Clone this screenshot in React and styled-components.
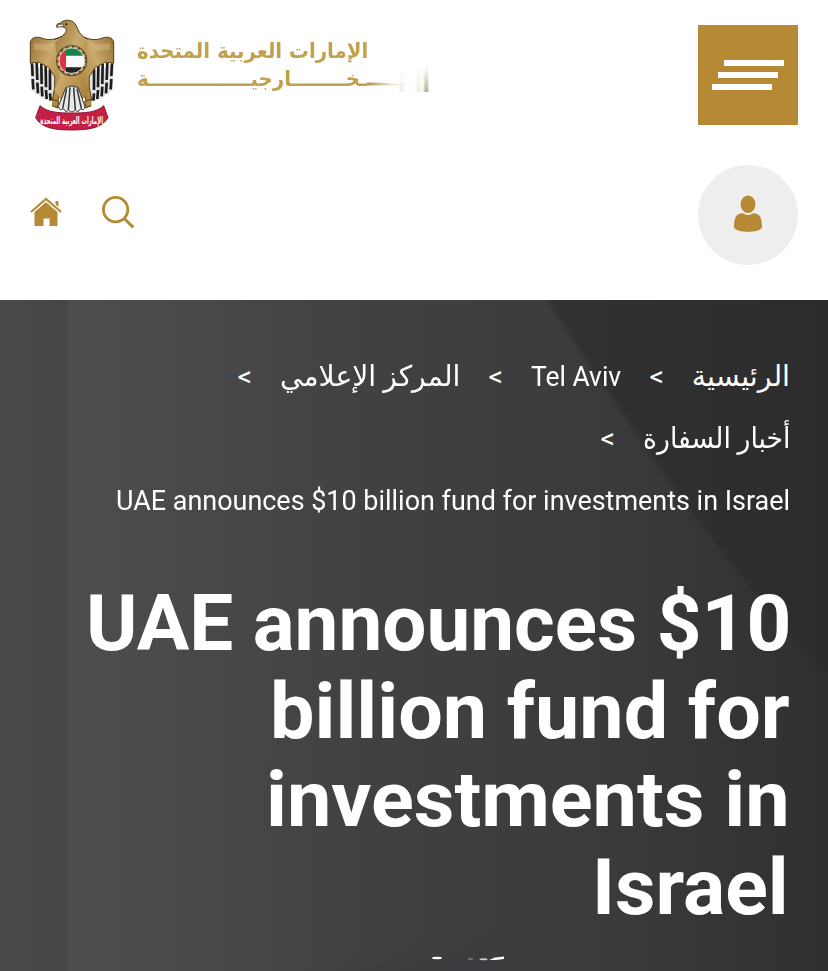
import React, { useLayoutEffect, useRef, useState } from "react";
import styled, { createGlobalStyle } from "styled-components";

const gold = "#b68a35";

const GlobalStyle = createGlobalStyle`
  * {
    box-sizing: border-box;
  }
  body {
    margin: 0;
    background: #fff;
  }
`;

const Page = styled.div`
  width: 828px;
  height: 971px;
  display: flex;
  flex-direction: column;
  overflow: hidden;
  font-family: Roboto, "DejaVu Sans", sans-serif;
`;

const Header = styled.header`
  height: 300px;
  padding: 20px 30px 0;
  background: #fff;
`;
const TopBar = styled.div`
  height: 145px;
  display: flex;
  justify-content: space-between;
`;
const Brand = styled.div`
  display: flex;
  gap: 23px;
`;
const BrandText = styled.div`
  padding-top: 18px;
  color: #c2a14d;
  font-family: "DejaVu Sans", sans-serif;
  font-weight: bold;
`;
const BrandLine = styled.div`
  display: flex;
  direction: ltr;
  align-items: flex-start;
  height: 28px;
  line-height: 27px;
  font-size: ${(props) => props.$size}px;
`;
const MenuButton = styled.button`
  width: 100px;
  height: 100px;
  margin-top: 5px;
  padding: 35px 14px 0;
  border: 0;
  background: ${gold};
  display: flex;
  flex-direction: column;
  gap: 6px;
`;
const MenuBar = styled.span`
  width: 60px;
  height: 6px;
  margin-left: ${(props) => props.$indent}px;
  background: #fff;
`;
const ToolBar = styled.div`
  display: flex;
  justify-content: space-between;
`;
const Tools = styled.div`
  display: flex;
  gap: 38px;
  padding-top: 30px;
`;
const UserButton = styled.button`
  width: 100px;
  height: 100px;
  padding: 0 0 3px;
  border: 0;
  border-radius: 50%;
  background: #eee;
  display: flex;
  align-items: center;
  justify-content: center;
`;

const Hero = styled.section`
  position: relative;
  flex: 1;
  padding: 46px 38px 0;
  direction: rtl;
  color: #fff;
`;
const Backdrop = styled.svg`
  position: absolute;
  top: 0;
  left: 0;
`;
const HeroContent = styled.div`
  position: relative;
`;
const Crumbs = styled.nav`
  font-size: 28.5px;
  font-weight: 400;
`;
const CrumbRow = styled.div`
  height: 62px;
  line-height: 62px;
  display: flex;
  gap: 28px;
`;
const Title = styled.h1`
  margin: 48px 0 0;
  font-size: 78px;
  line-height: 88px;
  font-weight: 700;
`;
const TitleLine = styled.span`
  display: flex;
  height: 88px;
  margin-right: ${(props) => props.$inset || 0}px;
`;

const FitBox = styled.span`
  display: block;
  flex: none;
  width: ${(props) => props.$width}px;
  direction: ${(props) => props.$dir};
`;
const FitInner = styled.span`
  display: inline-block;
  white-space: nowrap;
  transform-origin: ${(props) => (props.$dir === "rtl" ? "right" : "left")} center;
`;

// Squeezes or stretches a run of text to the given width
const FitText = ({ width, dir = "ltr", children }) => {
  const ref = useRef(null);
  const [scale, setScale] = useState(1);
  useLayoutEffect(() => {
    setScale(width / ref.current.offsetWidth);
  }, [width]);
  return (
    <FitBox $width={width} $dir={dir}>
      <FitInner ref={ref} $dir={dir} style={{ transform: `scaleX(${scale})` }}>
        {children}
      </FitInner>
    </FitBox>
  );
};

const Wing = () => (
  <g>
    <path d="M31 160 L34 241 L56 256 L78 270 L104 278 L119 222 L105 190 Z" fill="#e4e4e4" />
    <g stroke="#1d1d1d" strokeWidth="8" fill="none">
      <path d="M36 160 L38 198 M50 158 L52 210 M64 162 L65 222 M77 166 L78 232 M90 176 V240" />
      <path d="M38 207 L40 238 M52 218 L54 250 M65 230 L67 259 M78 240 L80 267 M90 250 L92 272" />
    </g>
    <path
      d="M128 78 C103 91 84 91 64 84 C48 78 34 83 31 96 L31 160 C39 154 48 162 55 156 C66 164 72 162 79 170 C88 169 91 181 98 192 C108 196 103 215 104 232 L97 270 L109 285 L125 240 L128 185 Z"
      fill="url(#plumage)"
      stroke="#513b14"
      strokeWidth="3"
    />
    <path d="M44 98 C64 104 82 101 105 98 L92 126 C72 120 57 118 40 120 Z" fill="#dcc592" opacity=".4" />
  </g>
);

const Emblem = () => (
  <svg width="84" height="112" viewBox="30 30 252 336" overflow="visible">
    <defs>
      <linearGradient id="plumage" x1="0" y1="0" x2="1" y2="1">
        <stop offset="0" stopColor="#94702f" />
        <stop offset=".45" stopColor="#c9a96d" />
        <stop offset="1" stopColor="#a67b30" />
      </linearGradient>
      <clipPath id="disc">
        <circle cx="155" cy="152" r="38" />
      </clipPath>
    </defs>
    <Wing />
    <g transform="translate(312 0) scale(-1 1)">
      <Wing />
    </g>
    <path
      d="M111 52 C107 44 113 40 122 39 C130 29 148 28 160 36 C173 47 172 66 190 80 L204 95 L192 205 L207 238 L187 270 L173 236 H138 L123 272 L103 238 L118 205 L105 98 L126 79 C138 68 142 61 137 55 C128 49 119 47 111 52 Z"
      fill="url(#plumage)"
    />
    <path
      d="M105 88 L126 79 C138 68 142 61 137 55 C128 49 119 47 111 52 C107 44 113 40 122 39 C130 29 148 28 160 36 C173 47 172 66 190 80 L204 88"
      fill="none"
      stroke="#513b14"
      strokeWidth="3"
    />
    <path d="M111 52 C111 44 118 41 129 43 L132 49 Z" fill="#eee6d3" stroke="#333" strokeWidth="2" />
    <circle cx="139" cy="43" r="3" fill="#171717" />
    <path
      d="M137 234 Q155 222 175 234 L195 290 Q192 304 182 296 Q174 310 166 300 Q155 312 146 300 Q138 310 130 296 Q119 304 115 290 Z"
      fill="#e8e8e8"
      stroke="#333"
      strokeWidth="3"
    />
    <path d="M140 236 L128 295 M150 232 L145 300 M161 232 L166 300 M171 236 L184 295" stroke="#333" strokeWidth="4.5" />
    <path d="M96 268 L116 274 L112 294 L96 287 M214 268 L194 274 L198 294 L214 287" fill="#b18a3c" stroke="#513b14" strokeWidth="3" />
    <circle cx="155" cy="152" r="45" fill="#c6b083" stroke="#705729" strokeWidth="4" />
    <circle cx="155" cy="152" r="42" fill="none" stroke="#46462e" strokeWidth="6" strokeDasharray="6 12" />
    <g clipPath="url(#disc)">
      <path d="M115 110 H196 V140 H115 Z" fill="#16834a" />
      <path d="M115 137 H196 V173 H115 Z" fill="#fafafa" />
      <path d="M115 172 H196 V195 H115 Z" fill="#242424" />
      <path d="M115 110 H138 V195 H115 Z" fill="#df3340" />
    </g>
    <circle cx="155" cy="152" r="38" fill="none" stroke="#f4f4f4" strokeWidth="2" />
    <path
      d="M60 287 C82 308 118 309 155 309 C194 309 230 308 251 287 L264 323 C246 354 206 360 155 360 C104 360 64 354 47 323 Z"
      fill="#c61f45"
      stroke="#8d1833"
      strokeWidth="3"
    />
    <text transform="translate(155 342) scale(.52 1)" textAnchor="middle" direction="rtl" fontFamily="DejaVu Sans, sans-serif" fontSize="31" fontWeight="bold" fill="#fff">
      الإمارات العربية المتحدة
    </text>
  </svg>
);

const FadedStroke = () => (
  <svg width="64" height="27" viewBox="0 0 64 27">
    <defs>
      <linearGradient id="smear">
        <stop offset="0" stopColor="#b0954c" />
        <stop offset="1" stopColor="#d9cfb5" stopOpacity="0" />
      </linearGradient>
      <linearGradient id="ghost" x1="0" y1="0" x2="0" y2="1">
        <stop offset="0" stopColor="#b8b08c" stopOpacity="0" />
        <stop offset="1" stopColor="#a49b70" />
      </linearGradient>
      <filter id="haze">
        <feGaussianBlur stdDeviation="1 .4" />
      </filter>
    </defs>
    <path d="M0 16.5 H10 L44 19 L10 19.5 H0 Z" fill="url(#smear)" />
    <g filter="url(#haze)">
      <rect x="33" y="2" width="4" height="24" fill="url(#ghost)" opacity=".2" />
      <rect x="49" y="0" width="5" height="26" fill="url(#ghost)" opacity=".2" />
      <rect x="57.5" y="0" width="3.5" height="26" fill="url(#ghost)" />
    </g>
  </svg>
);

const HomeIcon = () => (
  <svg width="34" height="34" viewBox="0 0 34 34" fill={gold}>
    <path d="M4.5 17 L16 7 L27.5 17 V31 H19.5 V23.5 H13.5 V31 H4.5 Z" />
    <path d="M1 17 L16 4 L31 17" fill="none" stroke={gold} strokeWidth="2.2" />
    <path d="M3 17.6 L16 6.4 L29 17.6" fill="none" stroke="#fff" strokeWidth="1" />
    <path d="M25.5 6 H28.5 V12 L25.5 9.5 Z" />
  </svg>
);

const SearchIcon = () => (
  <svg width="34" height="36" viewBox="0 0 34 36" fill="none" stroke={gold}>
    <circle cx="13.6" cy="14.6" r="12.2" strokeWidth="2.8" />
    <path d="M22.2 23.5 L31.3 32.4" strokeWidth="3" />
  </svg>
);

const UserIcon = () => (
  <svg width="28" height="37" viewBox="0 0 28 37" fill={gold}>
    <ellipse cx="14" cy="9.2" rx="7.4" ry="8.8" />
    <path d="M7.5 18.3 C10 18.3 10.5 20 14 20 C17.5 20 18 18.3 20.5 18.3 C26 19 28 23 28 32.5 C26 35.5 21 36.8 14 36.8 C7 36.8 2 35.5 0 32.5 C0 23 2 19 7.5 18.3 Z" />
  </svg>
);

const HeroBackdrop = () => (
  <Backdrop width="828" height="671" viewBox="0 0 828 671">
    <defs>
      <linearGradient id="wall">
        <stop offset="0" stopColor="#494949" />
        <stop offset=".079" stopColor="#464646" />
        <stop offset=".085" stopColor="#4d4d4d" />
        <stop offset=".2" stopColor="#4a4a4a" />
        <stop offset=".45" stopColor="#414141" />
        <stop offset=".75" stopColor="#3a3a3a" />
        <stop offset="1" stopColor="#303030" />
      </linearGradient>
      <linearGradient id="shade">
        <stop offset="0" stopColor="#323232" />
        <stop offset="1" stopColor="#2c2c2c" />
      </linearGradient>
      <filter id="soft" x="-10%" y="-10%" width="120%" height="120%" colorInterpolationFilters="sRGB">
        <feGaussianBlur stdDeviation="2" />
      </filter>
      <filter id="dusk" x="-30%" y="-60%" width="160%" height="220%" colorInterpolationFilters="sRGB">
        <feGaussianBlur stdDeviation="8" />
      </filter>
      <filter id="glint" x="-20%" y="-100%" width="140%" height="300%">
        <feGaussianBlur stdDeviation=".5" />
      </filter>
    </defs>
    <rect width="828" height="671" fill="url(#wall)" />
    <path d="M538 -15 C640 145 730 275 850 400 V-15 Z" fill="url(#shade)" filter="url(#soft)" />
    <path d="M300 690 Q420 652 505 650 V690 Z" fill="#393b40" opacity=".6" filter="url(#dusk)" />
    <g filter="url(#glint)">
      <ellipse cx="437" cy="658" rx="5" ry="1.2" fill="#fff" />
      <ellipse cx="470.5" cy="659" rx="3" ry="1" fill="#777" />
      <ellipse cx="483.5" cy="659.3" rx="4" ry="1" fill="#ccc" />
      <path d="M489 660 L495 657.5 L504 656.5 L504 659 L496 660 Z" fill="#fff" />
    </g>
  </Backdrop>
);

const crumbRows = [
  [
    { text: "الرئيسية", width: 98, dir: "rtl" },
    { text: ">", width: 15, dir: "rtl" },
    { text: "Tel Aviv", width: 90 },
    { text: ">", width: 15, dir: "rtl" },
    { text: "المركز الإعلامي", width: 180, dir: "rtl" },
    { text: ">", width: 15, dir: "rtl" },
  ],
  [
    { text: "أخبار السفارة", width: 147, dir: "rtl" },
    { text: ">", width: 15, dir: "rtl" },
  ],
  [{ text: "UAE announces $10 billion fund for investments in Israel", width: 674 }],
];

const titleLines = [
  { text: "UAE announces $10", width: 705, inset: -1 },
  { text: "billion fund for", width: 520, inset: 0 },
  { text: "investments in", width: 524, inset: 0 },
  { text: "Israel", width: 197, inset: 1 },
];

const App = () => {
  return (
    <Page>
      <GlobalStyle />
      <Header>
        <TopBar>
          <Brand>
            <Emblem />
            <BrandText>
              <BrandLine $size={21}>
                <FitText width={231} dir="rtl">الإمارات العربية المتحدة</FitText>
              </BrandLine>
              <BrandLine $size={21}>
                <FitText width={230} dir="rtl">ـخــــــــارجيـــــــــــــــة</FitText>
                <FadedStroke />
              </BrandLine>
            </BrandText>
          </Brand>
          <MenuButton aria-label="القائمة">
            <MenuBar $indent={12} />
            <MenuBar $indent={6} />
            <MenuBar $indent={0} />
          </MenuButton>
        </TopBar>
        <ToolBar>
          <Tools>
            <HomeIcon />
            <SearchIcon />
          </Tools>
          <UserButton>
            <UserIcon />
          </UserButton>
        </ToolBar>
      </Header>
      <Hero>
        <HeroBackdrop />
        <HeroContent>
          <Crumbs>
            {crumbRows.map((row, i) => (
              <CrumbRow key={i}>
                {row.map((crumb, j) => (
                  <FitText key={j} width={crumb.width} dir={crumb.dir}>
                    {crumb.text}
                  </FitText>
                ))}
              </CrumbRow>
            ))}
          </Crumbs>
          <Title>
            {titleLines.map((line) => (
              <TitleLine key={line.text} $inset={line.inset}>
                <FitText width={line.width}>{line.text}</FitText>
              </TitleLine>
            ))}
          </Title>
        </HeroContent>
      </Hero>
    </Page>
  );
};

export default App;
